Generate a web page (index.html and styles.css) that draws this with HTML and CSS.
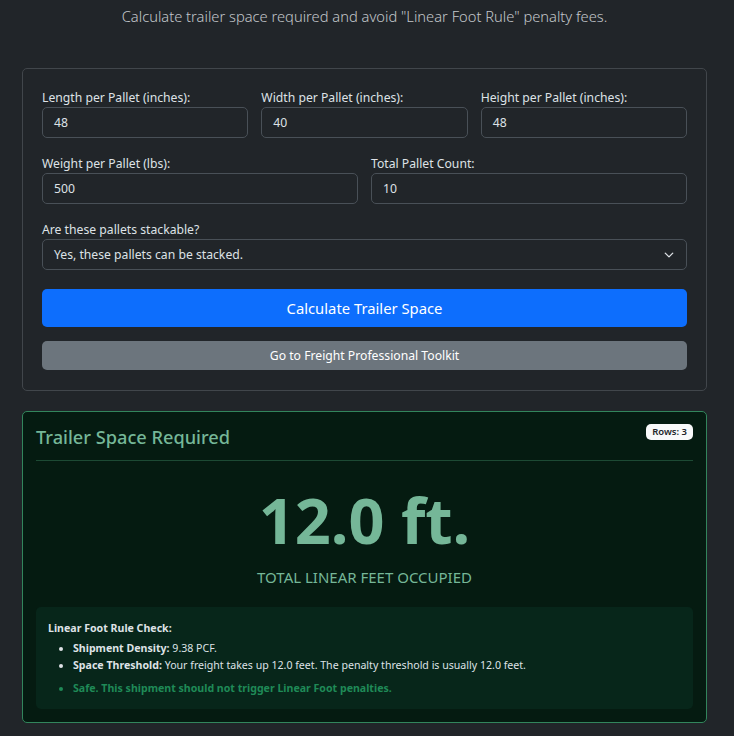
FILE: index.html
```html
<!DOCTYPE html>
<html lang="en">
<head>
<meta charset="utf-8">
<title>Trailer Space Calculator</title>
<link rel="stylesheet" href="styles.css">
</head>
<body>
<div class="page">
  <p class="lead">Calculate trailer space required and avoid "Linear Foot Rule" penalty fees.</p>

  <div class="card form-card">
    <div class="row row-3">
      <div class="field">
        <label>Length per Pallet (inches):</label>
        <div class="input">48</div>
      </div>
      <div class="field">
        <label>Width per Pallet (inches):</label>
        <div class="input">40</div>
      </div>
      <div class="field">
        <label>Height per Pallet (inches):</label>
        <div class="input">48</div>
      </div>
    </div>
    <div class="row row-2">
      <div class="field">
        <label>Weight per Pallet (lbs):</label>
        <div class="input">500</div>
      </div>
      <div class="field">
        <label>Total Pallet Count:</label>
        <div class="input">10</div>
      </div>
    </div>
    <div class="field">
      <label>Are these pallets stackable?</label>
      <div class="input select">
        <span>Yes, these pallets can be stacked.</span>
        <svg class="chev" width="10" height="10" viewBox="0 0 16 16"><path d="M2 5l6 6 6-6" fill="none" stroke="#dee2e6" stroke-width="2" stroke-linecap="round" stroke-linejoin="round"/></svg>
      </div>
    </div>
    <div class="btn btn-primary">Calculate Trailer Space</div>
    <div class="btn btn-secondary">Go to Freight Professional Toolkit</div>
  </div>

  <div class="card result-card">
    <div class="result-head">
      <h2>Trailer Space Required</h2>
      <span class="badge">Rows: 3</span>
    </div>
    <div class="big">12.0 ft.</div>
    <div class="caption">TOTAL LINEAR FEET OCCUPIED</div>
    <div class="check">
      <div class="check-title">Linear Foot Rule Check:</div>
      <ul>
        <li><strong>Shipment Density:</strong> 9.38 PCF.</li>
        <li><strong>Space Threshold:</strong> Your freight takes up 12.0 feet. The penalty threshold is usually 12.0 feet.</li>
        <li class="safe">Safe. This shipment should not trigger Linear Foot penalties.</li>
      </ul>
    </div>
  </div>
</div>
</body>
</html>
```

FILE: styles.css
```css
* { box-sizing: border-box; }
html, body { margin: 0; padding: 0; }
body {
  background: #212529;
  color: #dee2e6;
  font-family: "Noto Sans", "Open Sans", sans-serif;
  font-size: 13px;
  height: 736px;
  overflow: hidden;
}
.page {
  padding: 0 27px 0 22px;
}
.lead {
  margin: 0;
  padding-top: 6px;
  height: 68px;
  text-align: center;
  font-size: 14.7px;
  font-weight: 300;
  color: #c3c7cb;
}
.card {
  border-radius: 5px;
}
.form-card {
  border: 1px solid #41464b;
  padding: 21px 19px 20px;
}
.row {
  display: grid;
  column-gap: 13px;
  margin-bottom: 18px;
}
.row-3 { grid-template-columns: 1fr 1fr 1fr; }
.row-2 { grid-template-columns: 1fr 1fr; }
.field label {
  display: block;
  font-size: 12.2px;
  line-height: 16px;
  margin-bottom: 1px;
  color: #dee2e6;
}
.input {
  height: 31px;
  border: 1px solid #495057;
  border-radius: 5px;
  padding: 0 11px;
  display: flex;
  align-items: center;
  font-size: 12.2px;
  color: #dee2e6;
  background: #212529;
}
.select {
  justify-content: space-between;
  padding-right: 12px;
}
.chev { display: block; }
.btn {
  display: flex;
  align-items: center;
  justify-content: center;
  color: #fff;
  border-radius: 5px;
}
.btn-primary {
  margin-top: 19px;
  height: 38px;
  background: #0d6efd;
  font-size: 14.8px;
}
.btn-secondary {
  margin-top: 14px;
  height: 29px;
  background: #6c757d;
  font-size: 12.2px;
}
.result-card {
  margin-top: 20px;
  border: 1px solid #32855c;
  background: #051b11;
  padding: 12px 13px 13px;
}
.result-head {
  display: flex;
  justify-content: space-between;
  align-items: center;
  padding-bottom: 10px;
  border-bottom: 1px solid #1d4a34;
}
.result-head h2 {
  margin: 0;
  font-size: 18.2px;
  font-weight: 500;
  line-height: 26px;
  color: #75b798;
}
.badge {
  background: #f8f9fa;
  color: #212529;
  font-size: 9.5px;
  font-weight: 600;
  padding: 2px 6px;
  border-radius: 5px;
  line-height: 12px;
  margin-top: -10px;
}
.big {
  text-align: center;
  font-size: 63px;
  font-weight: 700;
  color: #75b798;
  line-height: 72px;
  margin-top: 23px;
}
.caption {
  text-align: center;
  font-size: 15px;
  color: #75b798;
  margin-top: 11px;
  line-height: 20px;
}
.check {
  margin-top: 20px;
  background: #07261a;
  border-radius: 5px;
  padding: 13px 12px 12px;
  font-size: 10.6px;
  color: #dee2e6;
}
.check-title {
  font-weight: 700;
  line-height: 16px;
  margin-bottom: 4px;
}
.check ul {
  margin: 0;
  padding-left: 25px;
}
.check li {
  line-height: 17px;
}
.check li.safe {
  margin-top: 6px;
  color: #1f8a57;
  font-weight: 700;
}
```
